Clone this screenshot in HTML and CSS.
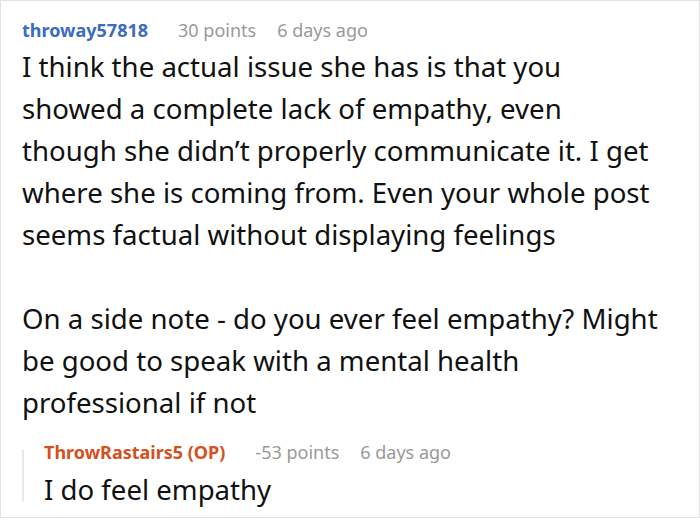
FILE: index.html
```html
<!DOCTYPE html>
<html>
<head>
<meta charset="utf-8">
<link rel="stylesheet" href="styles.css">
</head>
<body>
<div class="frame">
  <div class="comment">
    <div class="meta">
      <span class="user">throway57818</span>
      <span class="info">30 points</span>
      <span class="info">6 days ago</span>
    </div>
    <div class="body">
      <p>I think the actual issue she has is that you<br>showed a complete lack of empathy, even<br>though she didn’t properly communicate it. I get<br>where she is coming from. Even your whole post<br>seems factual without displaying feelings</p>
      <p>On a side note - do you ever feel empathy? Might<br>be good to speak with a mental health<br>professional if not</p>
    </div>
    <div class="reply">
      <div class="thread-line"></div>
      <div class="reply-content">
        <div class="meta">
          <span class="user op">ThrowRastairs5 (OP)</span>
          <span class="info">-53 points</span>
          <span class="info">6 days ago</span>
        </div>
        <div class="body reply-body">
          <p>I do feel empathy</p>
        </div>
      </div>
    </div>
  </div>
</div>
</body>
</html>
```
FILE: styles.css
```css
html, body {
  margin: 0;
  padding: 0;
  background: #fff;
}
.frame {
  width: 700px;
  height: 518px;
  box-sizing: border-box;
  border: 1px solid #e2e2e2;
  overflow: hidden;
  font-family: "Noto Sans", "Open Sans", sans-serif;
  color: #111;
}
.comment {
  padding: 17px 4px 0 21px;
}
.meta {
  display: flex;
  gap: 21px;
  align-items: baseline;
  font-size: 18px;
  line-height: 24px;
  white-space: nowrap;
}
.user {
  font-weight: bold;
  color: #3b6cbf;
  margin-right: 9px;
}
.user.op {
  color: #d5501f;
}
.info {
  color: #999;
}
.body {
  font-size: 27.6px;
  line-height: 42px;
  margin-top: 3px;
  white-space: nowrap;
}
.body p {
  margin: 0 0 42px;
}
.body p:last-child {
  margin-bottom: 0;
}
.reply {
  display: flex;
  margin-top: 17px;
}
.thread-line {
  width: 2px;
  height: 51px;
  margin-top: 10px;
  background: #e8e8e8;
  flex: none;
}
.reply-content {
  padding-left: 20px;
}
.reply-body {
  margin-top: 4px;
}
```
